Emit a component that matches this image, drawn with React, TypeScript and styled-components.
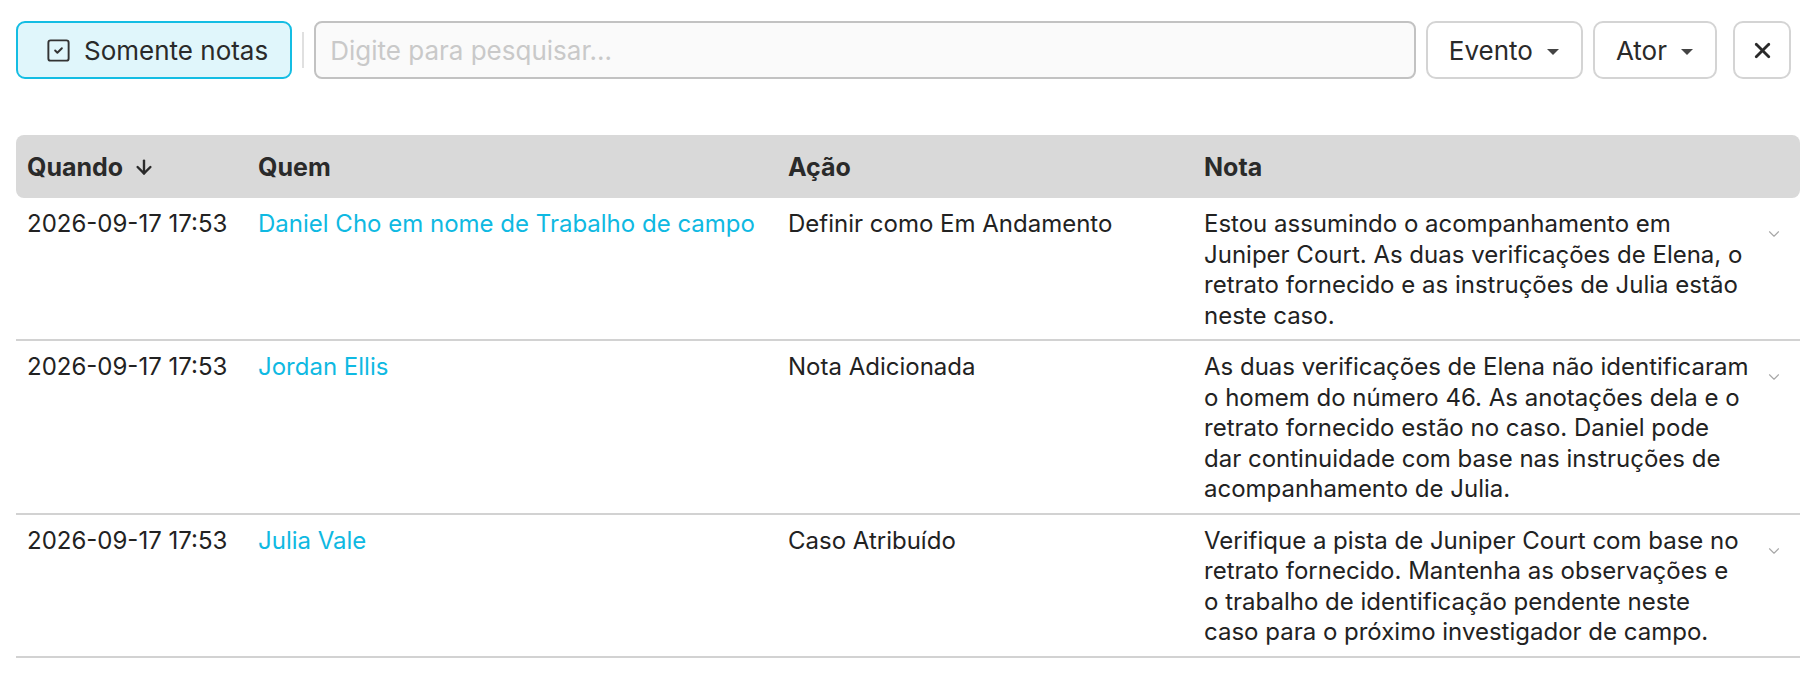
import styled, { createGlobalStyle } from 'styled-components'
import { ArrowDown, ChevronDown, SquareCheck, X } from 'lucide-react'

const GlobalStyle = createGlobalStyle`
   html, body {
      margin: 0;
      background: #ffffff;
   }
   body {
      font-family: Inter, "Noto Sans", "Liberation Sans", sans-serif;
      color: #222222;
   }
   * {
      box-sizing: border-box;
   }
`

type Entry = {
   id: number
   when: string
   who: string
   action: string
   note: string
}

const entries: Entry[] = [
   {
      id: 1,
      when: '2026-09-17 17:53',
      who: 'Daniel Cho em nome de Trabalho de campo',
      action: 'Definir como Em Andamento',
      note: 'Estou assumindo o acompanhamento em Juniper Court. As duas verificações de Elena, o retrato fornecido e as instruções de Julia estão neste caso.',
   },
   {
      id: 2,
      when: '2026-09-17 17:53',
      who: 'Jordan Ellis',
      action: 'Nota Adicionada',
      note: 'As duas verificações de Elena não identificaram o homem do número 46. As anotações dela e o retrato fornecido estão no caso. Daniel pode dar continuidade com base nas instruções de acompanhamento de Julia.',
   },
   {
      id: 3,
      when: '2026-09-17 17:53',
      who: 'Julia Vale',
      action: 'Caso Atribuído',
      note: 'Verifique a pista de Juniper Court com base no retrato fornecido. Mantenha as observações e o trabalho de identificação pendente neste caso para o próximo investigador de campo.',
   },
]

const App = () => {
   return (
      <>
         <GlobalStyle />
         <Page>
            <Toolbar>
               <NotesToggle type="button">
                  <SquareCheck size={27} strokeWidth={1.7} />
                  Somente notas
               </NotesToggle>
               <Divider />
               <SearchInput placeholder="Digite para pesquisar..." />
               <FilterButton type="button">
                  Evento <Caret />
               </FilterButton>
               <FilterButton type="button">
                  Ator <Caret />
               </FilterButton>
               <ClearButton type="button" aria-label="Limpar">
                  <X size={25} strokeWidth={2.7} />
               </ClearButton>
            </Toolbar>
            <Table>
               <HeaderRow>
                  <HeadCell>
                     Quando <ArrowDown size={22} strokeWidth={2.6} />
                  </HeadCell>
                  <HeadCell>Quem</HeadCell>
                  <HeadCell>Ação</HeadCell>
                  <HeadCell>Nota</HeadCell>
                  <HeadCell />
               </HeaderRow>
               {entries.map(({ id, when, who, action, note }) => (
                  <Row key={id}>
                     <Cell>{when}</Cell>
                     <Cell>
                        <ActorLink href="#">{who}</ActorLink>
                     </Cell>
                     <Cell>{action}</Cell>
                     <NoteCell>{note}</NoteCell>
                     <ExpandCell>
                        <ChevronDown size={18} strokeWidth={1.5} />
                     </ExpandCell>
                  </Row>
               ))}
            </Table>
         </Page>
      </>
   )
}

export default App

const Page = styled.main`
   padding: 21px 16px 0 16px;
   width: 1816px;
`
const Toolbar = styled.div`
   display: flex;
   align-items: center;
   gap: 10px;
   height: 58px;
   padding-right: 9px;
`
const NotesToggle = styled.button`
   display: flex;
   align-items: center;
   gap: 12px;
   height: 58px;
   padding: 0 22px 0 27px;
   border: 2px solid #14bde3;
   border-radius: 9px;
   background: #e0f6fb;
   color: #2a2a2a;
   font-family: inherit;
   font-size: 26px;
   font-weight: 400;
   cursor: pointer;
   svg {
      color: #333333;
   }
`
const Divider = styled.span`
   width: 2px;
   height: 36px;
   background: #e0e0e0;
`
const SearchInput = styled.input`
   flex: 1;
   height: 58px;
   padding: 0 14px;
   border: 2px solid #c2c2c2;
   border-radius: 8px;
   background: #fafafa;
   font-family: inherit;
   font-size: 26px;
   color: #222222;
   outline: none;
   &::placeholder {
      color: #c9c9c9;
   }
`
const FilterButton = styled.button`
   display: flex;
   align-items: center;
   gap: 14px;
   height: 58px;
   padding: 0 22px 0 21px;
   border: 2px solid #d4d4d4;
   border-radius: 10px;
   background: #ffffff;
   color: #2a2a2a;
   font-family: inherit;
   font-size: 26px;
   cursor: pointer;
`
const Caret = styled.span`
   width: 0;
   height: 0;
   border-left: 6px solid transparent;
   border-right: 6px solid transparent;
   border-top: 6px solid #444444;
   margin-top: 3px;
`
const ClearButton = styled.button`
   display: flex;
   align-items: center;
   justify-content: center;
   width: 58px;
   height: 58px;
   margin-left: 6px;
   padding: 0;
   border: 2px solid #d4d4d4;
   border-radius: 10px;
   background: #ffffff;
   color: #2a2a2a;
   cursor: pointer;
`
const Table = styled.div`
   margin-top: 56px;
   width: 1784px;
`
const columns = '231px 530px 416px 556px 1fr'
const HeaderRow = styled.div`
   display: grid;
   grid-template-columns: ${columns};
   align-items: center;
   height: 63px;
   background: #d9d9d9;
   border-radius: 8px;
`
const HeadCell = styled.div`
   display: flex;
   align-items: center;
   gap: 10px;
   padding-left: 11px;
   font-size: 25px;
   font-weight: 700;
   color: #2a2a2a;
`
const Row = styled.div`
   display: grid;
   grid-template-columns: ${columns};
   align-items: start;
   padding: 11px 0 8px;
   border-bottom: 2px solid #d2d2d2;
   font-size: 24px;
   line-height: 30.5px;
`
const Cell = styled.div`
   padding-left: 11px;
   white-space: nowrap;
`
const NoteCell = styled.div`
   padding-left: 11px;
`
const ExpandCell = styled.div`
   display: flex;
   padding-top: 16px;
   padding-left: 16px;
   color: #a8a8a8;
`
const ActorLink = styled.a`
   color: #0fb9e2;
   text-decoration: none;
`
